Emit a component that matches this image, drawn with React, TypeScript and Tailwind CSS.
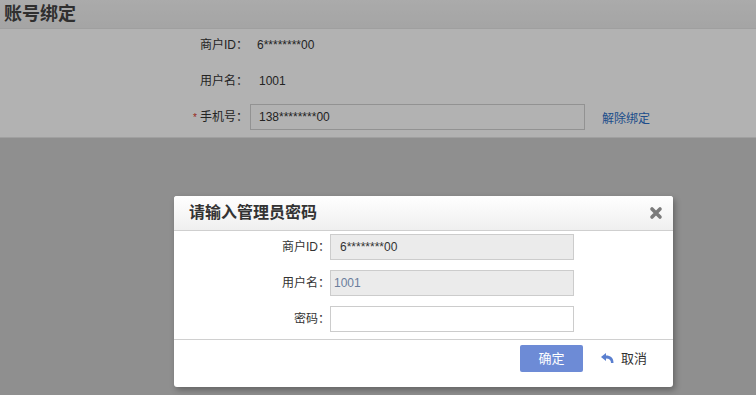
import React from 'react';

const FONT = "font-['Liberation_Sans','Noto_Sans_CJK_SC',sans-serif]";

/** Label + value row of the bound-account form. */
const FormRow: React.FC<{ label: string; required?: boolean; children: React.ReactNode }> = ({
  label,
  required,
  children,
}) => (
  <div className="flex items-center h-[26px]">
    <div className="w-[248px] text-right text-[12px] text-[#333]">
      {required && <span className="text-[#d9372b] mr-[3px] text-[10px] align-middle">*</span>}
      {label}
    </div>
    <div className="ml-[2px] flex items-center">{children}</div>
  </div>
);

/** Row inside the password dialog. */
const DialogRow: React.FC<{ label: string; value?: string; readOnly?: boolean; muted?: boolean }> = ({
  label,
  value,
  readOnly,
  muted,
}) => (
  <div className="flex items-center">
    <div className="w-[156px] text-right text-[12px] text-[#333]">{label}</div>
    <div
      className={`w-[244px] h-[26px] border border-[#cccccc] flex items-center text-[12px] ${
        readOnly ? 'bg-[#ebebeb]' : 'bg-white'
      } ${muted ? 'pl-[3px] text-[#6a7d9c]' : 'pl-[9px] text-[#333]'}`}
    >
      {value}
    </div>
  </div>
);

export default function App() {
  return (
    <div className={`relative h-[395px] w-[756px] overflow-hidden bg-[#cdcdcd] ${FONT}`}>
      {/* ── Page header ─────────────────────────────── */}
      <div className="h-[29px] bg-gradient-to-b from-[#f5f5f5] to-[#ececec] border-b border-[#e4e4e4] flex items-center pl-[4px]">
        <h1 className="text-[18px] font-bold text-[#444] leading-none">账号绑定</h1>
      </div>

      {/* ── Bound account form ──────────────────────── */}
      <div className="bg-white pt-[3px] pb-[7px] border-b border-[#e6e6e6] flex flex-col gap-[10px]">
        <FormRow label="商户ID：">
          <span className="pl-[7px] text-[12px] text-[#333]">6********00</span>
        </FormRow>
        <FormRow label="用户名：">
          <span className="pl-[9px] text-[12px] text-[#333]">1001</span>
        </FormRow>
        <FormRow label="手机号：" required>
          <div className="w-[335px] h-[26px] border border-[#d2d2d2] bg-white flex items-center pl-[8px] text-[12px] text-[#333]">
            138********00
          </div>
          <a className="ml-[17px] text-[12px] text-[#2b6fc8] mt-[3px]">解除绑定</a>
        </FormRow>
      </div>

      {/* ── Modal mask ──────────────────────────────── */}
      <div className="absolute inset-0 bg-black/30" />

      {/* ── Password dialog ─────────────────────────── */}
      <div className="absolute left-[174px] top-[196px] w-[499px] bg-white rounded-[3px] shadow-[2px_3px_6px_rgba(0,0,0,0.3)]">
        <div className="h-[35px] flex items-center justify-between pl-[15px] pr-[10px] bg-gradient-to-b from-[#ffffff] to-[#efefef] border-b border-[#cfcfcf] rounded-t-[3px]">
          <span className="text-[16px] font-bold text-[#333]">请输入管理员密码</span>
          <svg width="14" height="14" viewBox="0 0 14 14" className="mt-[-1px]">
            <path d="M3 3 L11 11 M11 3 L3 11" stroke="#7b7b7b" strokeWidth="3.6" strokeLinecap="round" />
          </svg>
        </div>
        <div className="pt-[3px] pb-[7px] flex flex-col gap-[10px]">
          <DialogRow label="商户ID：" value="6********00" readOnly />
          <DialogRow label="用户名：" value="1001" readOnly muted />
          <DialogRow label="密码：" />
        </div>
        <div className="border-t border-[#d0d0d0] h-[48px] flex items-start justify-end pt-[5px] pr-[26px]">
          <button className="w-[63px] h-[27px] rounded-[2px] bg-[#6d8bd6] text-white text-[13px]">确定</button>
          <button className="ml-[17px] h-[27px] flex items-center gap-[6px] text-[13px] text-[#333]">
            <svg width="15" height="13" viewBox="0 0 15 13">
              <path d="M1 5 L6 1 L6 3.5 C10.5 3.5 13.5 5.5 13.5 11 L11 11 C11 8 9.5 6.5 6 6.5 L6 9 Z" fill="#5a7fcf" />
            </svg>
            取消
          </button>
        </div>
      </div>
    </div>
  );
}
